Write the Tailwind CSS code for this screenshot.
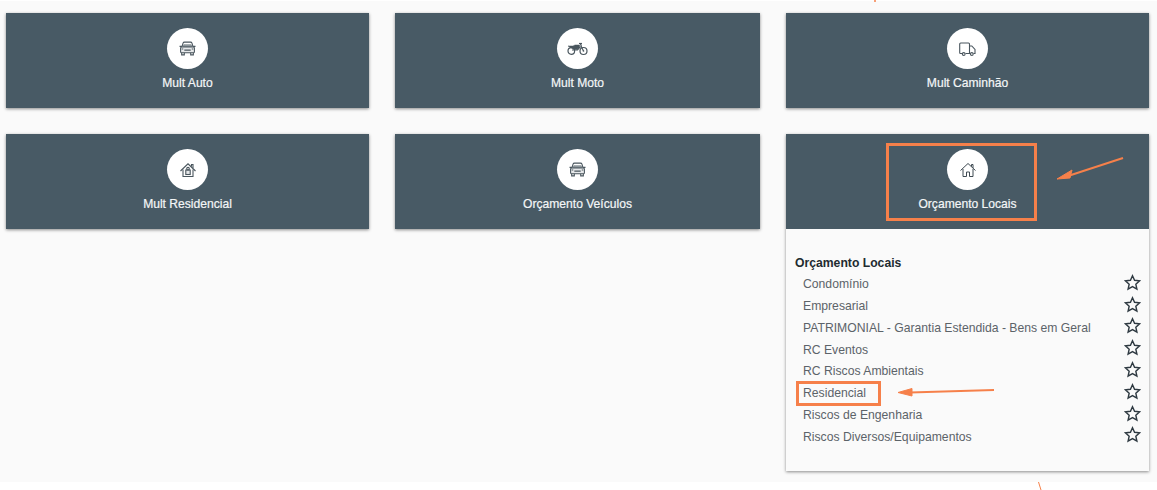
<!DOCTYPE html>
<html lang="en">
<head>
  <meta charset="UTF-8">
  <title>Orçamento</title>
  <script src="https://cdn.jsdelivr.net/npm/@tailwindcss/browser@4"></script>
</head>
<body class="bg-white font-['Liberation_Sans',Arial,sans-serif]">
  <div class="relative w-[1157px] h-[490px] overflow-hidden">
    <main class="h-[481px] mt-px bg-[#fafafa] pl-[6px] pt-3 grid grid-cols-[363px_365px_363px] gap-x-[26px] content-start">

      <button class="h-[95px] bg-[#485a65] shadow-[0_1px_3px_rgba(0,0,0,0.45)] flex flex-col items-center pt-[15px] text-[#f4f6f7] text-[12.1px]">
        <span class="w-[41px] h-[41px] rounded-full bg-white flex items-center justify-center">
          <svg class="w-[17px] h-[15px]" viewBox="0 0 16 14" fill="none" stroke="#4a565e" stroke-width="1"><path d="M2.800 5.500 3.800 2Q4.100 1 5.200 1H10.800Q11.900 1 12.200 2L13.200 5.500"/><path d="M4.500 3.500H11.500L12 5.500H4Z" fill="#9aa3a9" stroke-width=".5"/><path d="M.5 5H2.800M13.200 5H15.500"/><rect x="1.500" y="5.500" width="13" height="5.500" rx="1" fill="#e6e8ea"/><path d="M2.500 11V13H5V11M11 11V13H13.500V11M5 8.500H11M2.500 7.500H4M12 7.500H13.500"/></svg>
        </span>
        <span class="mt-[7px] leading-[14px] [-webkit-text-stroke:0.2px_#f4f6f7]">Mult Auto</span>
      </button>

      <button class="h-[95px] bg-[#485a65] shadow-[0_1px_3px_rgba(0,0,0,0.45)] flex flex-col items-center pt-[15px] text-[#f4f6f7] text-[12.1px]">
        <span class="w-[41px] h-[41px] rounded-full bg-white flex items-center justify-center">
          <svg class="w-[21px] h-[14px]" viewBox="0 0 21 14" fill="none" stroke="#4a565e" stroke-width="1.200"><circle cx="4.300" cy="9" r="3.300"/><circle cx="16.500" cy="9" r="3.500"/><circle cx="16.500" cy="9" r=".8" fill="#4a565e" stroke="none"/><path d="M5 8H10.500L13 5H14.500L16.500 9M13.500 1.500 14.500 5"/><path d="M1 4H6L8 3H12.500V5.500L10 7.500H7Z" fill="#4a565e" stroke-width=".5"/><path d="M12 1.500H15"/></svg>
        </span>
        <span class="mt-[7px] leading-[14px] [-webkit-text-stroke:0.2px_#f4f6f7]">Mult Moto</span>
      </button>

      <button class="h-[95px] bg-[#485a65] shadow-[0_1px_3px_rgba(0,0,0,0.45)] flex flex-col items-center pt-[15px] text-[#f4f6f7] text-[12.1px]">
        <span class="w-[41px] h-[41px] rounded-full bg-white flex items-center justify-center">
          <svg class="w-[17px] h-[14px]" viewBox="0 0 17 14" fill="none" stroke="#4a565e" stroke-width="1.100"><path d="M3 11.500H1.500Q.7 11.500.7 10.700V2Q.7 1 1.700 1H9.500Q10.500 1 10.500 2V11.500H6.500"/><path d="M10.500 4H12.800L16 7.500V11.500H14.500"/><path d="M10.500 11.500H11"/><circle cx="4.700" cy="12" r="1.400"/><circle cx="12.800" cy="12" r="1.400"/></svg>
        </span>
        <span class="mt-[7px] leading-[14px] [-webkit-text-stroke:0.2px_#f4f6f7]">Mult Caminhão</span>
      </button>

      <button class="mt-[26px] h-[95px] bg-[#485a65] shadow-[0_1px_3px_rgba(0,0,0,0.45)] flex flex-col items-center pt-[15px] text-[#f4f6f7] text-[12.1px]">
        <span class="w-[41px] h-[41px] rounded-full bg-white flex items-center justify-center">
          <svg class="w-4 h-4" viewBox="0 0 16 16" fill="none" stroke="#4a565e" stroke-width="1.100"><path d="M.5 9 8 1.800 15.500 9"/><path d="M11.500 4.500V2.500H13V6"/><path d="M3 7.500V14.500H13V7.500"/><rect x="5.800" y="8" width="4.400" height="4.500" fill="#e6e8ea"/><circle cx="8" cy="6.700" r="1.300"/></svg>
        </span>
        <span class="mt-[7px] leading-[14px] [-webkit-text-stroke:0.2px_#f4f6f7]">Mult Residencial</span>
      </button>

      <button class="mt-[26px] h-[95px] bg-[#485a65] shadow-[0_1px_3px_rgba(0,0,0,0.45)] flex flex-col items-center pt-[15px] text-[#f4f6f7] text-[12.1px]">
        <span class="w-[41px] h-[41px] rounded-full bg-white flex items-center justify-center">
          <svg class="w-[17px] h-[15px]" viewBox="0 0 16 14" fill="none" stroke="#4a565e" stroke-width="1"><path d="M2.800 5.500 3.800 2Q4.100 1 5.200 1H10.800Q11.900 1 12.200 2L13.200 5.500"/><path d="M4.500 3.500H11.500L12 5.500H4Z" fill="#9aa3a9" stroke-width=".5"/><path d="M.5 5H2.800M13.200 5H15.500"/><rect x="1.500" y="5.500" width="13" height="5.500" rx="1" fill="#e6e8ea"/><path d="M2.500 11V13H5V11M11 11V13H13.500V11M5 8.500H11M2.500 7.500H4M12 7.500H13.500"/></svg>
        </span>
        <span class="mt-[7px] leading-[14px] [-webkit-text-stroke:0.2px_#f4f6f7]">Orçamento Veículos</span>
      </button>

      <div class="mt-[26px] h-[337px] shadow-[0_1px_3px_rgba(0,0,0,0.45)] bg-[#fafafa]">
        <button class="w-full h-[95px] bg-[#485a65] flex flex-col items-center pt-[15px] text-[#f4f6f7] text-[12.1px]">
          <span class="w-[41px] h-[41px] rounded-full bg-white flex items-center justify-center">
            <svg class="w-4 h-4" viewBox="0 0 16 16" fill="none" stroke="#3f4a52" stroke-width="1"><path d="M.5 8.500 8 1.500 15.500 8.500"/><path d="M11.500 4.500V2.500H13V6"/><path d="M3 7V14.500H6.500V10H9.500V14.500H13V7"/></svg>
          </span>
          <span class="mt-[7px] leading-[14px] [-webkit-text-stroke:0.2px_#f4f6f7]">Orçamento Locais</span>
        </button>
        <div class="pt-[27px] pl-[9px] pr-[8px]">
          <h3 class="text-[12.2px] font-bold text-[#222b30] leading-[14px] mb-[3.5px]">Orçamento Locais</h3>
          <ul class="text-[12.2px] text-[#5c6369]">
            <li class="h-[21.8px] pl-2 flex items-center justify-between">Condomínio
              <svg class="w-[17px] h-[17px] -mt-[4px]" viewBox="0 0 24 24" fill="none" stroke="#2f3a42" stroke-width="2"><path d="M12 2.500 14.900 8.900 22 9.700 16.700 14.400 18.200 21.300 12 17.800 5.800 21.300 7.300 14.400 2 9.700 9.100 8.900Z"/></svg></li>
            <li class="h-[21.8px] pl-2 flex items-center justify-between">Empresarial
              <svg class="w-[17px] h-[17px] -mt-[4px]" viewBox="0 0 24 24" fill="none" stroke="#2f3a42" stroke-width="2"><path d="M12 2.500 14.900 8.900 22 9.700 16.700 14.400 18.200 21.300 12 17.800 5.800 21.300 7.300 14.400 2 9.700 9.100 8.900Z"/></svg></li>
            <li class="h-[21.8px] pl-2 flex items-center justify-between">PATRIMONIAL - Garantia Estendida - Bens em Geral
              <svg class="w-[17px] h-[17px] -mt-[4px]" viewBox="0 0 24 24" fill="none" stroke="#2f3a42" stroke-width="2"><path d="M12 2.500 14.900 8.900 22 9.700 16.700 14.400 18.200 21.300 12 17.800 5.800 21.300 7.300 14.400 2 9.700 9.100 8.900Z"/></svg></li>
            <li class="h-[21.8px] pl-2 flex items-center justify-between">RC Eventos
              <svg class="w-[17px] h-[17px] -mt-[4px]" viewBox="0 0 24 24" fill="none" stroke="#2f3a42" stroke-width="2"><path d="M12 2.500 14.900 8.900 22 9.700 16.700 14.400 18.200 21.300 12 17.800 5.800 21.300 7.300 14.400 2 9.700 9.100 8.900Z"/></svg></li>
            <li class="h-[21.8px] pl-2 flex items-center justify-between">RC Riscos Ambientais
              <svg class="w-[17px] h-[17px] -mt-[4px]" viewBox="0 0 24 24" fill="none" stroke="#2f3a42" stroke-width="2"><path d="M12 2.500 14.900 8.900 22 9.700 16.700 14.400 18.200 21.300 12 17.800 5.800 21.300 7.300 14.400 2 9.700 9.100 8.900Z"/></svg></li>
            <li class="h-[21.8px] pl-2 flex items-center justify-between">Residencial
              <svg class="w-[17px] h-[17px] -mt-[4px]" viewBox="0 0 24 24" fill="none" stroke="#2f3a42" stroke-width="2"><path d="M12 2.500 14.900 8.900 22 9.700 16.700 14.400 18.200 21.300 12 17.800 5.800 21.300 7.300 14.400 2 9.700 9.100 8.900Z"/></svg></li>
            <li class="h-[21.8px] pl-2 flex items-center justify-between">Riscos de Engenharia
              <svg class="w-[17px] h-[17px] -mt-[4px]" viewBox="0 0 24 24" fill="none" stroke="#2f3a42" stroke-width="2"><path d="M12 2.500 14.900 8.900 22 9.700 16.700 14.400 18.200 21.300 12 17.800 5.800 21.300 7.300 14.400 2 9.700 9.100 8.900Z"/></svg></li>
            <li class="h-[21.8px] pl-2 flex items-center justify-between">Riscos Diversos/Equipamentos
              <svg class="w-[17px] h-[17px] -mt-[4px]" viewBox="0 0 24 24" fill="none" stroke="#2f3a42" stroke-width="2"><path d="M12 2.500 14.900 8.900 22 9.700 16.700 14.400 18.200 21.300 12 17.800 5.800 21.300 7.300 14.400 2 9.700 9.100 8.900Z"/></svg></li>
          </ul>
        </div>
      </div>
    </main>

    <!-- orange annotations drawn over the screenshot -->
    <div class="absolute left-[886px] top-[143px] w-[151px] h-[78px] border-[3px] border-[#f6804a]"></div>
    <div class="absolute left-[796px] top-[381px] w-[85px] h-[25px] border-[3px] border-[#f6804a]"></div>
    <svg class="absolute left-0 top-0 pointer-events-none" width="1157" height="490" fill="none" stroke="#f6804a">
      <path d="M875 0V2" stroke-width="1.500"/>
      <path d="M1123 158 1068 176" stroke-width="2"/>
      <path d="M1057 179 1072 170 1070 178Z" fill="#f6804a" stroke-width="1"/>
      <path d="M994 390 910 392.500" stroke-width="2"/>
      <path d="M898 392.500 912 388.500V396Z" fill="#f6804a" stroke-width="1"/>
      <path d="M1038.500 482 1041 490" stroke-width="1"/>
    </svg>
  </div>
</body>
</html>
